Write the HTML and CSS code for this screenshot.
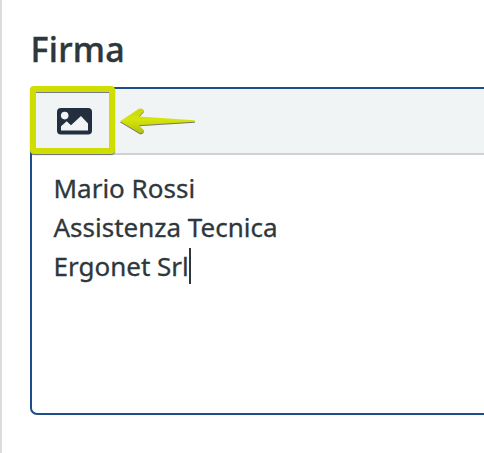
FILE: index.html
```
<!DOCTYPE html>
<html lang="it">
<head>
<meta charset="utf-8">
<title>Firma</title>
<link rel="stylesheet" href="styles.css">
</head>
<body>
<main class="panel">
  <h1 class="label">Firma</h1>
  <section class="editor">
    <div class="toolbar">
      <button class="image-button" aria-label="Immagine">
        <svg class="image-icon" viewBox="0 0 35 27">
          <rect x="0" y="0" width="35" height="26.5" rx="4" fill="#232e3e"/>
          <circle cx="7.7" cy="7.6" r="3.8" fill="#f0f4f5"/>
          <path d="M4 22.4V18.3L9.7 13.3L14 17.3L24 8L31 15.5V22.4Z" fill="#f0f4f5"/>
        </svg>
      </button>
      <svg class="arrow" viewBox="0 0 80 30">
        <defs>
          <linearGradient id="lime" x1="0" y1="0" x2="0" y2="1">
            <stop offset="0" stop-color="#c8d80c"/>
            <stop offset=".45" stop-color="#d5e50a"/>
            <stop offset="1" stop-color="#b2c20e"/>
          </linearGradient>
        </defs>
        <path class="arrow-shape" fill="url(#lime)" d="M2 13.2L21 .8Q25.4 -.2 26 3L20.8 8.4L76.5 12.2Q77.5 13 76.5 13.8L20.8 17.3L26 22.2Q25.4 25.7 22 25.2Z"/>
      </svg>
    </div>
    <div class="content">
      <div>Mario Rossi</div>
      <div>Assistenza Tecnica</div>
      <div class="last">Ergonet Srl<i class="caret"></i></div>
    </div>
  </section>
</main>
</body>
</html>
```
FILE: styles.css
```
* { box-sizing: border-box; }
body {
  margin: 0;
  height: 453px;
  overflow: hidden;
  background: #fff;
  color: #2e373b;
  font-family: "Noto Sans", "Open Sans", sans-serif;
}
.panel {
  height: 453px;
  border-left: 2px solid #dcdcdc;
  padding: 24px 0 0 28px;
}
.label {
  margin: 0;
  height: 63px;
  padding-left: .6px;
  font-size: 34px;
  line-height: 50px;
  font-weight: 500;
  letter-spacing: .25px;
  -webkit-text-stroke: .4px #2e373b;
}
.editor {
  height: 328px;
  border: 2px solid #1d4e89;
  border-right: 0;
  border-radius: 7px 0 0 7px;
}
.toolbar {
  display: flex;
  height: 66px;
  background: #f0f4f5;
  border-bottom: 2px solid #cdd1d9;
  border-top-left-radius: 5px;
}
.image-button {
  flex: none;
  width: 85px;
  height: 68px;
  margin: -3px 0 0 -2px;
  padding: 2px 0 0 3px;
  border: 6px solid #cfde00;
  border-radius: 4px;
  background: #f0f4f5;
  box-shadow: 0 1px 1px #555c, inset 0 1px 0 #777d85;
  display: flex;
  align-items: center;
  justify-content: center;
}
.image-icon { width: 35px; height: 27px; }
.arrow {
  width: 80px;
  height: 30px;
  margin: 19px 0 0 3px;
  overflow: visible;
}
.arrow-shape { filter: drop-shadow(0 1px .6px #555c); }
.content {
  padding: 14px 0 0 21.5px;
  font-size: 26px;
  line-height: 39px;
  white-space: nowrap;
  -webkit-text-stroke: .3px #2e373b;
}
.last { display: flex; }
.caret {
  width: 2px;
  height: 36px;
  margin: 1px 0 0 .5px;
  background: #2e373b;
}
```
